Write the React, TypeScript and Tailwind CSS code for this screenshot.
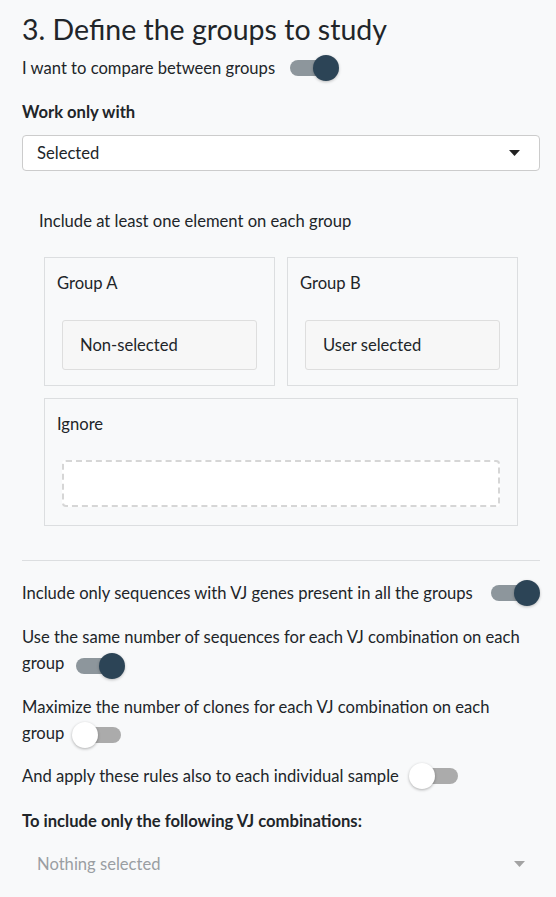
import { ReactNode } from "react";

// toggle switch: knob 26px, track 16px
function Toggle({ on }: { on: boolean }) {
  return (
    <span className="relative inline-block align-middle w-[49px] h-[26px] shrink-0">
      <span
        className={`absolute top-[5px] h-[16px] w-[40px] rounded-full ${
          on ? "left-0 bg-[#8d969c]" : "right-0 bg-[#ababab]"
        }`}
      />
      <span
        className={`absolute top-0 size-[26px] rounded-full ${
          on
            ? "right-0 bg-[#2c4456] shadow-[0_1px_3px_rgba(0,0,0,0.25)]"
            : "left-0 bg-white shadow-[0_1px_3px_rgba(0,0,0,0.3)]"
        }`}
      />
    </span>
  );
}

function Caret({ light }: { light?: boolean }) {
  return (
    <svg width="11" height="6" viewBox="0 0 11 6" className="shrink-0">
      <path d="M0 0 L11 0 L5.5 6 Z" fill={light ? "#a3a3a3" : "#222"} />
    </svg>
  );
}

function GroupBox({ title, children }: { title: string; children: ReactNode }) {
  return (
    <div className="border border-[#dcdee0] h-[129px] pl-[12px] pt-[12px]">
      <div className="leading-[26px]">{title}</div>
      <div className="mt-[24px] mr-[17px] ml-[5px]">{children}</div>
    </div>
  );
}

function Item({ label }: { label: string }) {
  return (
    <div className="h-[50px] border border-[#dedede] bg-[#f7f7f7] rounded-[3px] flex items-center pl-[17px]">
      {label}
    </div>
  );
}

export default function App() {
  return (
    <div
      className="h-[897px] overflow-hidden bg-[#f8f9fa] text-[#212529] text-[16.6px] pl-[22px] pr-[16px]"
      style={{ fontFamily: "'Source Sans Pro', Lato, 'Liberation Sans', sans-serif" }}
    >
      <h1 className="pt-[11px] text-[28.5px] leading-[36px] font-normal">3. Define the groups to study</h1>

      <div className="mt-[8px] flex items-center gap-[15px] leading-[26px]">
        <span>I want to compare between groups</span>
        <Toggle on />
      </div>

      <div className="mt-[18px] font-bold leading-[26px]">Work only with</div>

      <div className="mt-[10px] h-[36px] bg-white border border-[#cccccc] rounded-[4px] flex items-center justify-between pl-[14px] pr-[19px]">
        <span>Selected</span>
        <Caret />
      </div>

      <div className="mt-[37px] pl-[17px] leading-[26px]">Include at least one element on each group</div>

      <div className="mt-[23px] mx-[22px] grid grid-cols-2 gap-[12px]">
        <GroupBox title="Group A">
          <Item label="Non-selected" />
        </GroupBox>
        <GroupBox title="Group B">
          <Item label="User selected" />
        </GroupBox>
        <div className="col-span-2 border border-[#dcdee0] h-[128px] pl-[12px] pt-[12px]">
          <div className="leading-[26px]">Ignore</div>
          <div className="mt-[23px] ml-[5px] mr-[17px] h-[47px] bg-white border-2 border-dashed border-[#d6d6d6] rounded-[4px]" />
        </div>
      </div>

      <hr className="mt-[34px] border-t border-[#dcdee0]" />

      <div className="mt-[19px] flex items-center justify-between leading-[26px]">
        <span>Include only sequences with VJ genes present in all the groups</span>
        <Toggle on />
      </div>

      <div className="mt-[18px] leading-[26px]">
        Use the same number of sequences for each VJ combination on each{" "}
        <span className="whitespace-nowrap">
          group
          <span className="inline-block ml-[12px] align-middle">
            <Toggle on />
          </span>
        </span>
      </div>

      <div className="mt-[15px] leading-[26px]">
        Maximize the number of clones for each VJ combination on each{" "}
        <span className="whitespace-nowrap">
          group
          <span className="inline-block ml-[8px] align-middle">
            <Toggle on={false} />
          </span>
        </span>
      </div>

      <div className="mt-[15px] flex items-center gap-[10px] leading-[26px]">
        <span>And apply these rules also to each individual sample</span>
        <Toggle on={false} />
      </div>

      <div className="mt-[19px] font-bold leading-[26px]">To include only the following VJ combinations:</div>

      <div className="mt-[12px] h-[36px] flex items-center justify-between pl-[15px] pr-[15px] text-[#9a9ea2]">
        <span>Nothing selected</span>
        <Caret light />
      </div>
    </div>
  );
}
